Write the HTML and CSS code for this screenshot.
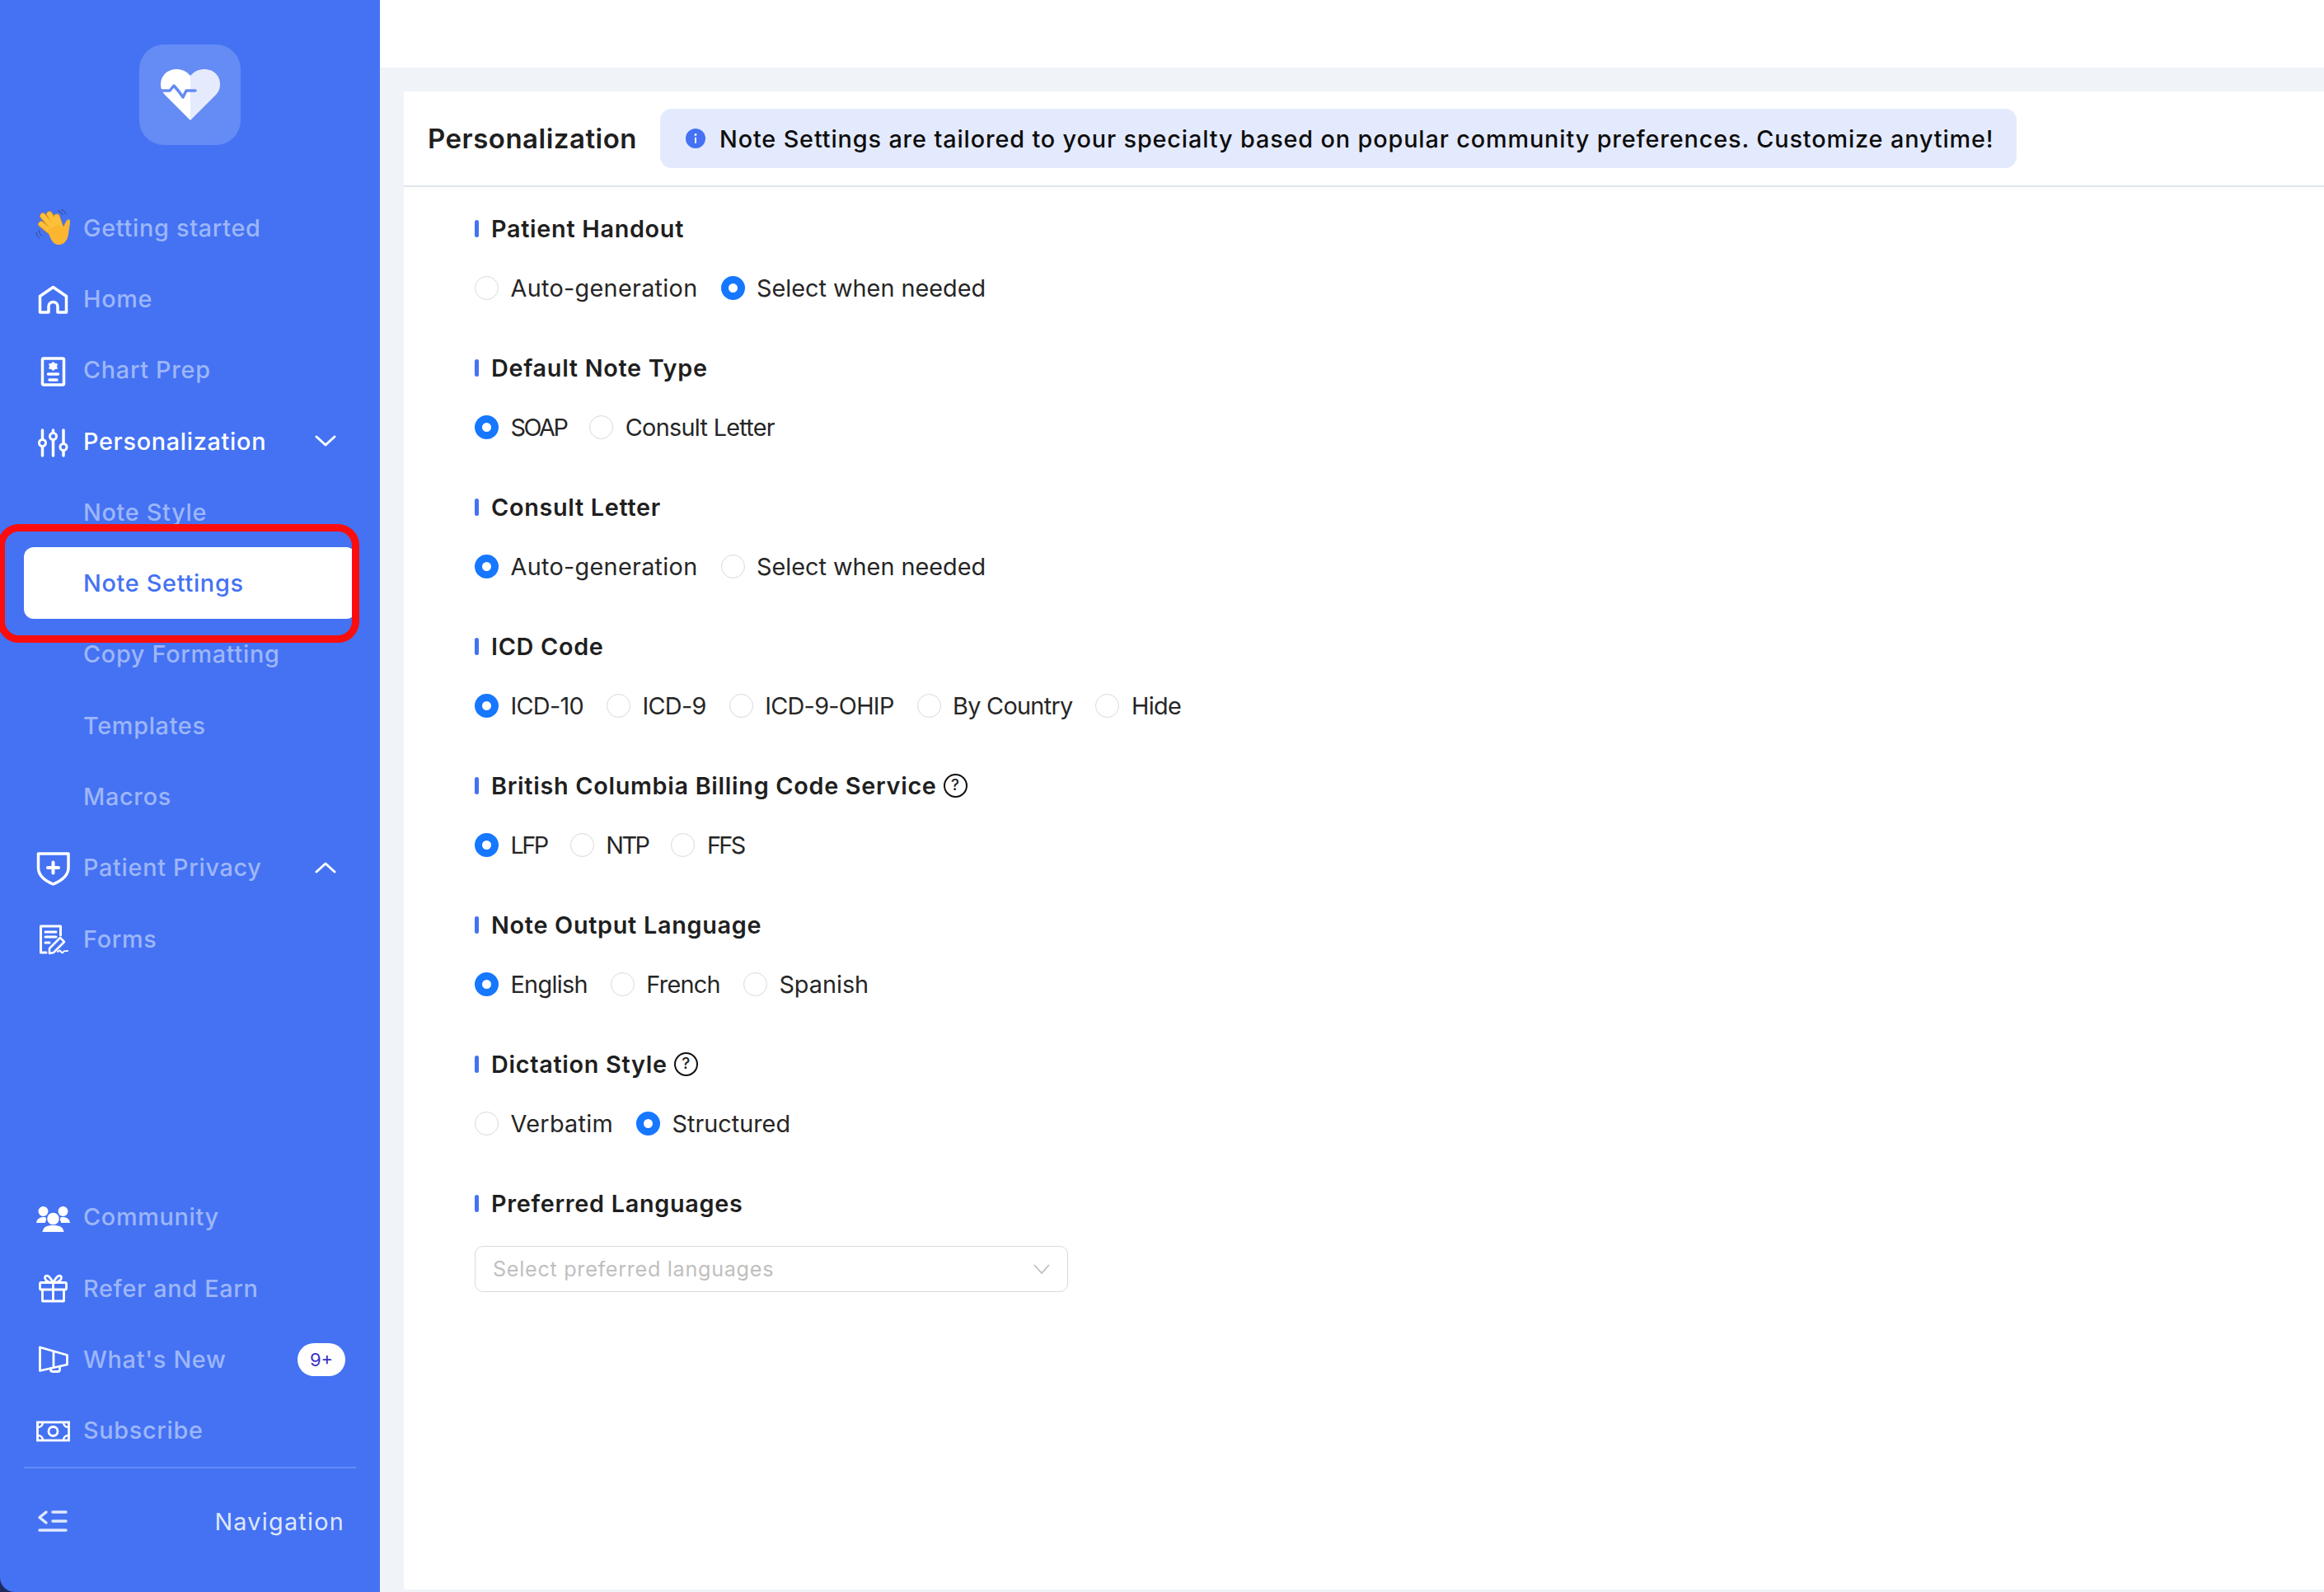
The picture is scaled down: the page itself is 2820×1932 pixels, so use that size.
FILE: index.html
```html
<!DOCTYPE html>
<html lang="en">
<head>
  <meta charset="UTF-8">
  <title>Note Settings</title>
  <link rel="stylesheet" href="styles.css">
</head>
<body>
  <div class="app">
    <aside class="sidebar">
      <div class="logo-wrap">
        <div class="logo">
          <svg width="76" height="64" viewBox="0 0 76 64">
            <path d="M38 9C33 3 27 1 21 1 10 1 2 9 2 19c0 6 2 10 6 14l30 30z" fill="#fff"/>
            <path d="M38 9C43 3 49 1 55 1c11 0 19 8 19 18 0 6-2 10-6 14L38 63z" fill="#e5ebfd"/>
            <path d="M2 27H13L18 21 24 28 29 35 33 27H44" fill="none" stroke="#658bf5" stroke-width="3.5" stroke-linecap="round" stroke-linejoin="round"/>
          </svg>
        </div>
      </div>

      <nav class="nav">
        <a class="nav-item" href="#">
          <svg class="nav-icon" viewBox="0 0 44 44">
            <g fill="none" stroke-linecap="round">
              <path d="M8 18 24 31M10 8 26 27M18 6 29 24M27 9 32 23" stroke="#d98f1a" stroke-width="7.500"/>
              <path d="M8 18 24 31M10 8 26 27M18 6 29 24M27 9 32 23" stroke="#fcc03a" stroke-width="6"/>
            </g>
            <path d="M16 25 30 18 34 24C36 20 37 15 40 12.500 42.500 11.500 43.500 14 43 16.500L41 30C40 38 35 44 28 43 21 42 18 33 16 25z" fill="#fbb52f"/>
            <path d="M2 28c0 3 2 6 4 7M5 25c0 3 2 6 4 7M28 2c3 0 5 2 6 5M32 0c3 1 5 3 6 6" fill="none" stroke="#34487f" stroke-width="1"/>
          </svg>
          <span class="nav-text">Getting started</span>
        </a>
        <a class="nav-item" href="#">
          <svg class="nav-icon" viewBox="0 0 44 44">
            <path d="M6.500 39V19.500L22.500 8.500 38.500 19.500V39H28V32a5.500 5.500 0 0 0-11 0v7z" fill="none" stroke="#fff" stroke-width="3.500" stroke-linejoin="round"/>
          </svg>
          <span class="nav-text">Home</span>
        </a>
        <a class="nav-item" href="#">
          <svg class="nav-icon" viewBox="0 0 44 44">
            <rect x="9.500" y="8" width="26" height="32" rx="1.500" fill="none" stroke="#fff" stroke-width="3.500"/>
            <path d="M22.500 12 25 14 28 14.500 27 17.500 28 20.500 25 21 22.500 23 20 21 17 20.500 18 17.500 17 14.500 20 14z" fill="#fff"/>
            <path d="M16.500 27H28.500M18 34H27" stroke="#fff" stroke-width="3.500" stroke-linecap="round"/>
          </svg>
          <span class="nav-text">Chart Prep</span>
        </a>
        <a class="nav-item nav-open" href="#">
          <svg class="nav-icon" viewBox="0 0 44 44">
            <path d="M9.500 9V20M9.500 29V40M22.500 9V12M22.500 21V40M35 9V25M35 34V40" stroke="#fff" stroke-width="3.500" stroke-linecap="round"/>
            <circle cx="9.500" cy="24.500" r="4" fill="none" stroke="#fff" stroke-width="3"/>
            <circle cx="22.500" cy="16.500" r="4" fill="none" stroke="#fff" stroke-width="3"/>
            <circle cx="35" cy="29.500" r="4" fill="none" stroke="#fff" stroke-width="3"/>
          </svg>
          <span class="nav-text">Personalization</span>
          <svg class="nav-chevron" viewBox="0 0 26 16"><path d="M2 3 13 13 24 3" fill="none" stroke="#fff" stroke-width="3" stroke-linecap="round" stroke-linejoin="round"/></svg>
        </a>
        <a class="nav-item nav-sub" href="#"><span class="nav-text">Note Style</span></a>
        <a class="nav-item nav-sub nav-active" href="#"><span class="nav-text">Note Settings</span></a>
        <a class="nav-item nav-sub" href="#"><span class="nav-text">Copy Formatting</span></a>
        <a class="nav-item nav-sub" href="#"><span class="nav-text">Templates</span></a>
        <a class="nav-item nav-sub" href="#"><span class="nav-text">Macros</span></a>
        <a class="nav-item" href="#">
          <svg class="nav-icon" viewBox="0 0 44 44">
            <path d="M4.500 5H41V22C41 32 31 38.500 22.500 42 14 38.500 4.500 32 4.500 22z" fill="none" stroke="#fff" stroke-width="3.500" stroke-linejoin="round"/>
            <path d="M22.500 15.500V28.500M16 22H29" stroke="#fff" stroke-width="4" stroke-linecap="round"/>
          </svg>
          <span class="nav-text">Patient Privacy</span>
          <svg class="nav-chevron" viewBox="0 0 26 16"><path d="M2 13 13 3 24 13" fill="none" stroke="#fff" stroke-width="3" stroke-linecap="round" stroke-linejoin="round"/></svg>
        </a>
        <a class="nav-item" href="#">
          <svg class="nav-icon" viewBox="0 0 44 44">
            <path d="M14 39H7.500V7H31.500V18" fill="none" stroke="#fff" stroke-width="3" stroke-linecap="round" stroke-linejoin="round"/>
            <path d="M13 14H26M13 20H26M13 27H18" stroke="#fff" stroke-width="3" stroke-linecap="round"/>
            <path d="M18 40V34L31 21 36 26 23 39z" fill="none" stroke="#fff" stroke-width="2.500" stroke-linejoin="round"/>
            <path d="M28 38c2-2 3-2 4 0s3 1 3 0 3-1 5-1" fill="none" stroke="#fff" stroke-width="2" stroke-linecap="round"/>
          </svg>
          <span class="nav-text">Forms</span>
        </a>
      </nav>

      <nav class="nav nav-bottom">
        <a class="nav-item" href="#">
          <svg class="nav-icon" viewBox="0 0 44 44">
            <g fill="#fff">
              <circle cx="10.500" cy="15" r="6"/>
              <circle cx="34.500" cy="15" r="6"/>
              <path d="M2 29c1-5 4-7 9-7 3 0 4 1 5 2-2 1-3 3-3 5zM43 29c-1-5-4-7-9-7-3 0-4 1-5 2 2 1 3 3 3 5z"/>
              <circle cx="22.500" cy="24" r="8" stroke="#4472f3" stroke-width="1.500"/>
              <path d="M9.500 40c1-6 5-8 13-8s12 2 13 8z"/>
            </g>
          </svg>
          <span class="nav-text">Community</span>
        </a>
        <a class="nav-item" href="#">
          <svg class="nav-icon" viewBox="0 0 44 44">
            <g fill="none" stroke="#fff" stroke-width="2.800" stroke-linejoin="round">
              <rect x="6.500" y="15.500" width="32" height="8.500" rx="1.500"/>
              <path d="M9.500 24V38H35.500V24M22.500 15.500V38"/>
              <path d="M22.500 15.500C19 9 16 6 13.500 7.500S13 15.500 22.500 15.500C32 15.500 34 9 31.500 7.500S26 9 22.500 15.500z"/>
            </g>
          </svg>
          <span class="nav-text">Refer and Earn</span>
        </a>
        <a class="nav-item" href="#">
          <svg class="nav-icon" viewBox="0 0 44 44">
            <g fill="none" stroke="#fff" stroke-width="2.800" stroke-linejoin="round">
              <path d="M6.500 7 39.500 16.500V28L6.500 35.500z"/>
              <path d="M23 12V31M19.500 31.500V34a2.500 2.500 0 0 0 2.500 2.500H28a2.500 2.500 0 0 0 2.500-2.500V29"/>
            </g>
          </svg>
          <span class="nav-text">What's New</span>
          <span class="nav-badge">9+</span>
        </a>
        <a class="nav-item" href="#">
          <svg class="nav-icon" viewBox="0 0 44 44">
            <rect x="3.500" y="12" width="38" height="22" fill="none" stroke="#fff" stroke-width="2.800"/>
            <circle cx="22.500" cy="23" r="5.500" fill="none" stroke="#fff" stroke-width="2.800"/>
            <path d="M4 18c3 0 6-2 6-6M41 18c-3 0-6-2-6-6M4 28c3 0 6 2 6 6M41 28c-3 0-6 2-6 6" fill="none" stroke="#fff" stroke-width="2.500"/>
          </svg>
          <span class="nav-text">Subscribe</span>
        </a>
      </nav>

      <div class="nav-footer">
        <svg class="nav-icon" viewBox="0 0 44 44">
          <path d="M22 11H38M22 22H38M6 33H38M14 11 6 17.500 14 24" fill="none" stroke="#dfe7fd" stroke-width="3.500" stroke-linecap="round" stroke-linejoin="round"/>
        </svg>
        <span class="nav-footer-text">Navigation</span>
      </div>

      <div class="highlight"></div>
    </aside>

    <main class="main">
      <div class="topbar"></div>
      <div class="card">
        <header class="card-header">
          <h1 class="card-title">Personalization</h1>
          <div class="notice">
            <svg class="notice-icon" viewBox="0 0 24 24">
              <circle cx="12" cy="12" r="12" fill="#4472f3"/>
              <circle cx="12" cy="7.500" r="1.400" fill="#fff"/>
              <rect x="11" y="10.500" width="2" height="7.500" rx="1" fill="#fff"/>
            </svg>
            <span class="notice-text">Note Settings are tailored to your specialty based on popular community preferences. Customize anytime!</span>
          </div>
        </header>

        <div class="card-body">
          <section class="setting">
            <h2 class="setting-title">Patient Handout</h2>
            <div class="radio-row">
              <label class="radio radio-wide"><span class="radio-dot"></span>Auto-generation</label>
              <label class="radio"><span class="radio-dot checked"></span>Select when needed</label>
            </div>
          </section>
          <section class="setting">
            <h2 class="setting-title">Default Note Type</h2>
            <div class="radio-row">
              <label class="radio radio-caps"><span class="radio-dot checked"></span>SOAP</label>
              <label class="radio radio-tight"><span class="radio-dot"></span>Consult Letter</label>
            </div>
          </section>
          <section class="setting">
            <h2 class="setting-title">Consult Letter</h2>
            <div class="radio-row">
              <label class="radio radio-wide"><span class="radio-dot checked"></span>Auto-generation</label>
              <label class="radio"><span class="radio-dot"></span>Select when needed</label>
            </div>
          </section>
          <section class="setting">
            <h2 class="setting-title">ICD Code</h2>
            <div class="radio-row">
              <label class="radio radio-tight"><span class="radio-dot checked"></span>ICD-10</label>
              <label class="radio radio-tight"><span class="radio-dot"></span>ICD-9</label>
              <label class="radio radio-tight"><span class="radio-dot"></span>ICD-9-OHIP</label>
              <label class="radio radio-tight"><span class="radio-dot"></span>By Country</label>
              <label class="radio radio-tight"><span class="radio-dot"></span>Hide</label>
            </div>
          </section>
          <section class="setting">
            <h2 class="setting-title">British Columbia Billing Code Service <span class="help">?</span></h2>
            <div class="radio-row">
              <label class="radio radio-caps"><span class="radio-dot checked"></span>LFP</label>
              <label class="radio radio-caps"><span class="radio-dot"></span>NTP</label>
              <label class="radio radio-caps"><span class="radio-dot"></span>FFS</label>
            </div>
          </section>
          <section class="setting">
            <h2 class="setting-title">Note Output Language</h2>
            <div class="radio-row">
              <label class="radio radio-tight"><span class="radio-dot checked"></span>English</label>
              <label class="radio radio-tight"><span class="radio-dot"></span>French</label>
              <label class="radio"><span class="radio-dot"></span>Spanish</label>
            </div>
          </section>
          <section class="setting">
            <h2 class="setting-title">Dictation Style <span class="help">?</span></h2>
            <div class="radio-row">
              <label class="radio radio-wide"><span class="radio-dot"></span>Verbatim</label>
              <label class="radio"><span class="radio-dot checked"></span>Structured</label>
            </div>
          </section>
          <section class="setting">
            <h2 class="setting-title">Preferred Languages</h2>
            <div class="select">
              <span class="select-text">Select preferred languages</span>
              <svg class="select-arrow" viewBox="0 0 20 12"><path d="M1 1 10 11 19 1" fill="none" stroke="#bfbfbf" stroke-width="1.800"/></svg>
            </div>
          </section>
        </div>
      </div>
    </main>
  </div>
</body>
</html>
```

FILE: styles.css
```css
* {
  box-sizing: border-box;
}

html, body {
  margin: 0;
  height: 100%;
}

body {
  background-color: #1f2b5e;
  font-family: Inter, "Liberation Sans", sans-serif;
  color: #1f1f1f;
  overflow: hidden;
}

.app {
  display: flex;
  height: 1932px;
}

/* sidebar */
.sidebar {
  position: relative;
  display: flex;
  flex-direction: column;
  width: 461px;
  flex-shrink: 0;
  padding-left: 29px;
  padding-right: 29px;
  background-color: #4472f3;
  border-bottom-left-radius: 18px;
}

.logo-wrap {
  display: flex;
  justify-content: center;
  height: 233px;
  padding-top: 54px;
}

.logo {
  display: flex;
  align-items: center;
  justify-content: center;
  width: 123px;
  height: 122px;
  border-radius: 30px;
  background-color: #658bf5;
}

.nav-item {
  display: flex;
  align-items: center;
  height: 86.300px;
  padding-left: 13px;
  padding-right: 14px;
  border-radius: 12px;
  text-decoration: none;
  color: #9db6f9;
}

.nav-icon {
  width: 44px;
  height: 44px;
  flex-shrink: 0;
  margin-right: 15px;
}

.nav-text {
  flex: 1;
  font-size: 28.800px;
  font-weight: 500;
  letter-spacing: 0.700px;
  white-space: nowrap;
}

.nav-open {
  color: #fff;
}

.nav-sub {
  padding-left: 72px;
}

.nav-active {
  background-color: #fff;
  color: #4472f3;
}

.nav-chevron {
  width: 26px;
  height: 16px;
  margin-right: 10px;
}

.nav-badge {
  width: 58px;
  height: 40px;
  margin-right: -1px;
  border-radius: 20px;
  background-color: #fff;
  color: #3730c4;
  font-size: 22px;
  line-height: 40px;
  text-align: center;
}

.nav-bottom {
  margin-top: auto;
}

.nav-footer {
  display: flex;
  align-items: center;
  justify-content: space-between;
  height: 152px;
  margin-top: 1px;
  padding-bottom: 22px;
  padding-left: 13px;
  padding-right: 14px;
  border-top: 2px solid #648bf6;
}

.nav-footer-text {
  font-size: 28.800px;
  letter-spacing: 1.250px;
  color: #dfe7fd;
}

/* red callout round the active item */
.highlight {
  position: absolute;
  left: -3px;
  top: 636px;
  width: 439px;
  height: 144px;
  border: 9px solid #fb0d0d;
  border-radius: 26px;
  pointer-events: none;
}

/* main */
.main {
  display: flex;
  flex-direction: column;
  flex: 1;
  min-width: 0;
  background-color: #f0f4f9;
}

.topbar {
  height: 82px;
  flex-shrink: 0;
  background-color: #fff;
}

.card {
  flex: 1;
  margin-top: 29px;
  margin-left: 29px;
  margin-bottom: 3px;
  background-color: #fff;
}

.card-header {
  display: flex;
  align-items: center;
  gap: 28px;
  height: 116px;
  padding-left: 29px;
  border-bottom: 2px solid #dfe5ec;
}

.card-title {
  margin: 0;
  font-size: 33px;
  font-weight: 600;
  letter-spacing: 0.500px;
  line-height: 1;
}

.notice {
  display: flex;
  align-items: center;
  gap: 17px;
  height: 72px;
  padding: 0 28px 0 31px;
  border-radius: 14px;
  background-color: #e4eafd;
}

.notice-icon {
  width: 24px;
  height: 24px;
}

.notice-text {
  font-size: 28.800px;
  font-weight: 500;
  letter-spacing: 0.870px;
  color: #0d0d0d;
  white-space: nowrap;
}

.card-body {
  padding-top: 30px;
  padding-left: 86px;
}

.setting {
  height: 169px;
}

.setting-title {
  position: relative;
  display: flex;
  align-items: center;
  gap: 8px;
  height: 40px;
  margin: 0 0 32px;
  padding-left: 20px;
  font-size: 28.800px;
  font-weight: 600;
  letter-spacing: 0.700px;
}

.setting-title::before {
  content: "";
  position: absolute;
  left: 0;
  top: 10px;
  width: 5px;
  height: 21px;
  border-radius: 3px;
  background-color: #4472f3;
}

.help {
  width: 29px;
  height: 29px;
  border: 2.500px solid #111;
  border-radius: 50%;
  font-size: 19px;
  font-weight: 500;
  line-height: 24px;
  text-align: center;
  letter-spacing: 0;
}

.radio-row {
  display: flex;
  align-items: center;
  gap: 28px;
  height: 40px;
}

.radio {
  display: flex;
  align-items: center;
  gap: 14.500px;
  font-size: 28.800px;
  color: #262626;
  white-space: nowrap;
}

.radio-wide {
  letter-spacing: 0.300px;
}

.radio-tight {
  letter-spacing: -0.700px;
}

.radio-caps {
  letter-spacing: -2.500px;
}

.radio-dot {
  width: 29px;
  height: 29px;
  flex-shrink: 0;
  border: 1.500px solid #d9d9d9;
  border-radius: 50%;
  background-color: #fff;
}

.radio-dot.checked {
  border: 9px solid #1677ff;
}

.select {
  display: flex;
  align-items: center;
  justify-content: space-between;
  width: 720px;
  height: 56px;
  padding: 0 21px;
  border: 1.500px solid #d9d9d9;
  border-radius: 10px;
}

.select-text {
  font-size: 25.200px;
  letter-spacing: 0.700px;
  color: #bfbfbf;
}

.select-arrow {
  width: 20px;
  height: 12px;
}
```
